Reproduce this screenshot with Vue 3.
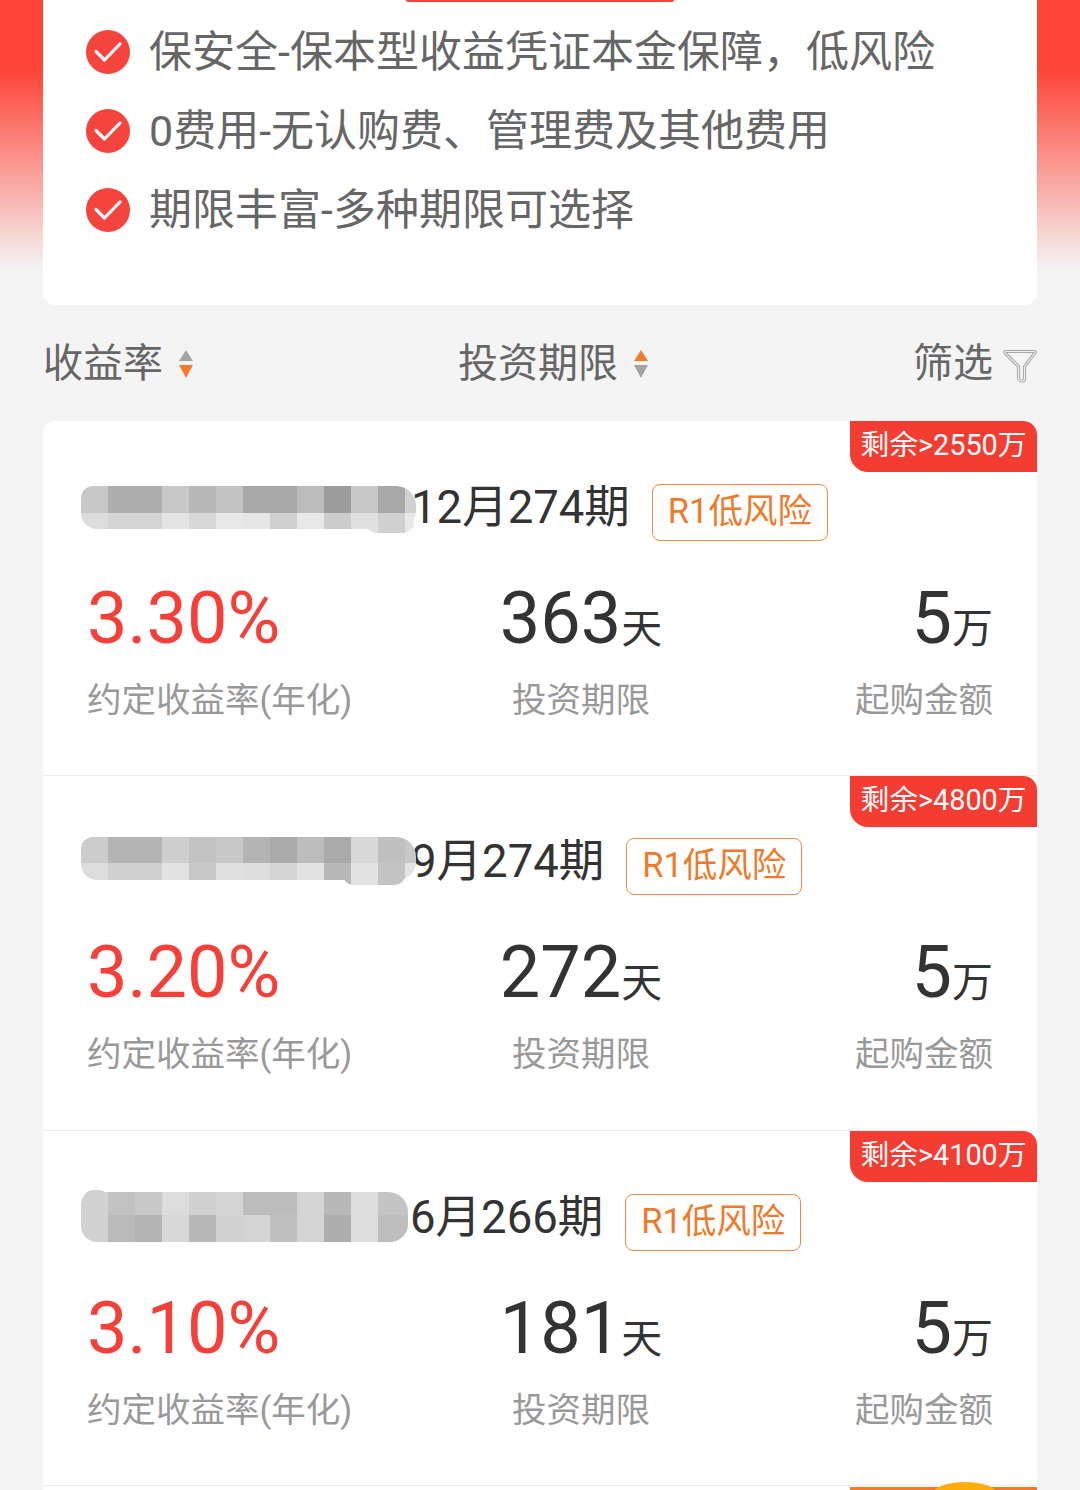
<template>
  <div class="page">
    <div class="hero">
      <div class="hero-card">
        <span class="hero-pill"></span>
        <div v-for="item in features" :key="item" class="feature">
          <svg class="check" viewBox="0 0 44 44">
            <circle cx="22" cy="22" r="22" fill="#f5433d" />
            <path d="M10 21.500l8.500 8.500L34 14" fill="none" stroke="#fff" stroke-width="3.200" stroke-linecap="round" stroke-linejoin="round" />
          </svg>
          <span class="feature-text">{{ item }}</span>
        </div>
      </div>
    </div>

    <div class="sort-bar">
      <div class="sort-item">
        <span class="sort-text">收益率</span>
        <svg class="sort-icon" viewBox="0 0 16 30">
          <path d="M8 1L15 12H1z" fill="#a3a3a3" />
          <path d="M1 16h14L8 29z" fill="#f47a2c" />
        </svg>
      </div>
      <div class="sort-item">
        <span class="sort-text">投资期限</span>
        <svg class="sort-icon" viewBox="0 0 16 30">
          <path d="M8 1L15 12H1z" fill="#f47a2c" />
          <path d="M1 16h14L8 29z" fill="#a3a3a3" />
        </svg>
      </div>
      <div class="sort-item">
        <span class="sort-text">筛选</span>
        <svg class="filter-icon" viewBox="0 0 34 34">
          <path class="filter-outer" d="M2.500 2.500h29a.8.8 0 0 1 .6 1.300L21.500 17.500V30a2 2 0 0 1-2 2h-1a3 3 0 0 1-3-3V17.500L1.900 3.800a.8.8 0 0 1 .6-1.300z" />
          <path class="filter-inner" d="M2.500 2.500h29a.8.8 0 0 1 .6 1.300L21.500 17.500V30a2 2 0 0 1-2 2h-1a3 3 0 0 1-3-3V17.500L1.900 3.800a.8.8 0 0 1 .6-1.300z" />
        </svg>
      </div>
    </div>

    <div class="list">
      <div v-for="p in products" :key="p.title" class="row">
        <div class="badge">剩余&gt;{{ p.left }}万</div>
        <div class="head">
          <div class="mosaic-wrap" :style="{ width: p.maskWidth + 'px', marginBottom: p.maskLift + 'px', marginRight: p.maskGap + 'px' }">
            <span class="bump" :style="p.bump"></span>
            <div class="mosaic">
              <div v-for="(line, i) in p.mask" :key="i" class="mosaic-line" :style="{ height: p.lines[i] + 'px' }">
                <i v-for="(c, j) in line" :key="j" :style="{ background: '#' + c + c + c }"></i>
              </div>
            </div>
          </div>
          <span class="title">{{ p.title }}</span>
          <span class="risk">R1低风险</span>
        </div>
        <div class="stats">
          <div>
            <div class="num rate">{{ p.rate }}</div>
            <div class="label">约定收益率(年化)</div>
          </div>
          <div class="mid">
            <div class="num">{{ p.days }}<small>天</small></div>
            <div class="label">投资期限</div>
          </div>
          <div class="end">
            <div class="num">5<small>万</small></div>
            <div class="label">起购金额</div>
          </div>
        </div>
      </div>
      <div class="next-row">
        <div class="ribbon"><span></span></div>
      </div>
    </div>
  </div>
</template>

<script setup>
const features = [
  "保安全-保本型收益凭证本金保障，低风险",
  "0费用-无认购费、管理费及其他费用",
  "期限丰富-多种期限可选择",
];

const products = [
  {
    title: "12月274期",
    left: 2550,
    rate: "3.30%",
    days: 363,
    maskWidth: 335,
    maskLift: 10,
    maskGap: 0,
    lines: [27, 16],
    bump: {
      left: "285px",
      width: "48px",
      bottom: "-4px",
      height: "20px",
      background: "linear-gradient(90deg, #e0e0e0 12px, #d0d0d0 12px, #d0d0d0 39px, #e8e8e8 39px)",
    },
    mask: [
      "c8 ae ae c8 b8 c2 a8 a8 bc 9c c8 a8 d0".split(" "),
      "dc d4 d4 e4 d8 e8 e6 d0 e8 cc e0 d0 e8".split(" "),
    ],
  },
  {
    title: "9月274期",
    left: 4800,
    rate: "3.20%",
    days: 272,
    maskWidth: 335,
    maskLift: 16,
    maskGap: 0,
    lines: [26, 17],
    bump: {
      left: "262px",
      width: "62px",
      bottom: "-5px",
      height: "20px",
      background: "linear-gradient(90deg, #b8b8b8 8px, #e2e2e2 8px, #e2e2e2 35px, #c4c4c4 35px)",
    },
    mask: [
      "cc b4 b4 ce c2 c8 b4 aa bc aa d8 c0 c8".split(" "),
      "dc d0 d0 e2 c8 e0 de d4 e2 b8 e2 c4 e4".split(" "),
    ],
  },
  {
    title: "6月266期",
    left: 4100,
    rate: "3.10%",
    days: 181,
    maskWidth: 327,
    maskLift: 11,
    maskGap: 7,
    lines: [23, 27],
    bump: { left: "2px", width: "26px", top: "-2px", height: "20px", background: "#d2d2d2" },
    mask: [
      "d2 c2 c8 dc d0 d4 bc bc d4 b8 dc c4 c4".split(" "),
      "d2 ba b4 d8 b8 d2 d4 c0 d4 ae dc be be".split(" "),
    ],
  },
];
</script>

<style>
html,
body {
  margin: 0;
  background: #f4f4f4;
}
</style>

<style scoped>
.page {
  width: 1080px;
  height: 1490px;
  overflow: hidden;
  background: #f4f4f4;
  font-family: Roboto, "Noto Sans CJK SC", sans-serif;
}

.hero {
  height: 305px;
  padding: 0 43px;
  box-sizing: border-box;
  background: linear-gradient(#ff4538 0, #ff4538 70px, #f4f4f4 270px);
}

.hero-card {
  position: relative;
  height: 305px;
  padding-top: 12px;
  box-sizing: border-box;
  background: #fff;
  border-radius: 0 0 12px 12px;
}

.hero-pill {
  position: absolute;
  left: 362px;
  top: -2px;
  width: 270px;
  height: 4px;
  border-radius: 0 0 10px 10px;
  background: #f5433d;
}

.feature {
  display: flex;
  align-items: center;
  height: 79px;
  padding-left: 43px;
  font-size: 43px;
  color: #666;
}

.feature-text {
  margin-bottom: 8px;
}

.check {
  width: 44px;
  height: 44px;
  margin-right: 19px;
  flex: none;
}

.sort-bar {
  display: flex;
  justify-content: space-between;
  align-items: center;
  height: 116px;
  padding: 0 43px;
  box-sizing: border-box;
  font-size: 40px;
  color: #666;
}

.sort-item {
  display: flex;
  align-items: center;
}

.sort-text {
  margin-bottom: 6px;
}

.sort-icon {
  width: 16px;
  height: 30px;
  margin-left: 15px;
  margin-top: 2px;
}

.filter-icon {
  width: 34px;
  height: 34px;
  margin-left: 10px;
  margin-top: 6px;
}

.filter-outer,
.filter-inner {
  fill: none;
  stroke-linejoin: round;
}

.filter-outer {
  stroke: #a8a8a8;
  stroke-width: 3.200;
}

.filter-inner {
  stroke: #eee;
  stroke-width: 1.200;
}

.list {
  margin: 0 43px;
  background: #fff;
  border-radius: 12px 12px 0 0;
}

.row {
  position: relative;
  height: 355px;
  padding-top: 63px;
  box-sizing: border-box;
  border-bottom: 1px solid #eee;
}

.row:nth-child(2) .head {
  margin-top: -1px;
  margin-bottom: 1px;
}

.badge {
  position: absolute;
  right: 0;
  top: 0;
  width: 187px;
  height: 51px;
  line-height: 49px;
  text-align: center;
  font-size: 28.800px;
  color: #fff;
  background: #f33c32;
  border-radius: 0 14px 0 18px;
}

.head {
  display: flex;
  align-items: center;
  height: 57px;
  padding-left: 38px;
}

.mosaic-wrap {
  position: relative;
  flex: none;
}

.bump {
  position: absolute;
  border-radius: 14px;
}

.mosaic {
  position: relative;
  overflow: hidden;
  border-radius: 12px 20px 18px 16px;
}

.mosaic-line {
  display: flex;
}

.mosaic-line i {
  flex: none;
  width: 27px;
}

.title {
  margin-left: -5px;
  margin-bottom: 20px;
  font-size: 45.500px;
  color: #333;
}

.risk {
  width: 174px;
  height: 55px;
  margin-left: 22px;
  line-height: 52px;
  text-align: center;
  font-size: 34.500px;
  color: #ee7a2c;
  border: 1px solid #ef8a45;
  border-radius: 8px;
}

.stats {
  display: grid;
  grid-template-columns: 344px 300px 1fr;
  margin-top: 36px;
  padding: 0 44px;
}

.num {
  height: 84px;
  line-height: 84px;
  font-size: 72px;
  color: #333;
}

.num small {
  font-size: 41px;
}

.rate {
  color: #f5403a;
}

.label {
  height: 50px;
  margin-top: 14px;
  line-height: 50px;
  font-size: 34.500px;
  color: #999;
  white-space: nowrap;
}

.mid {
  text-align: center;
}

.end {
  text-align: right;
}

.next-row {
  position: relative;
  height: 4px;
}

.ribbon {
  position: absolute;
  right: 0;
  top: 1px;
  width: 187px;
  height: 40px;
  background: #ef7a2b;
  border-radius: 0 0 0 18px;
}

.ribbon span {
  position: absolute;
  left: 83px;
  top: -5px;
  width: 64px;
  height: 24px;
  border-radius: 50%;
  background: #fdae0d;
}
</style>
